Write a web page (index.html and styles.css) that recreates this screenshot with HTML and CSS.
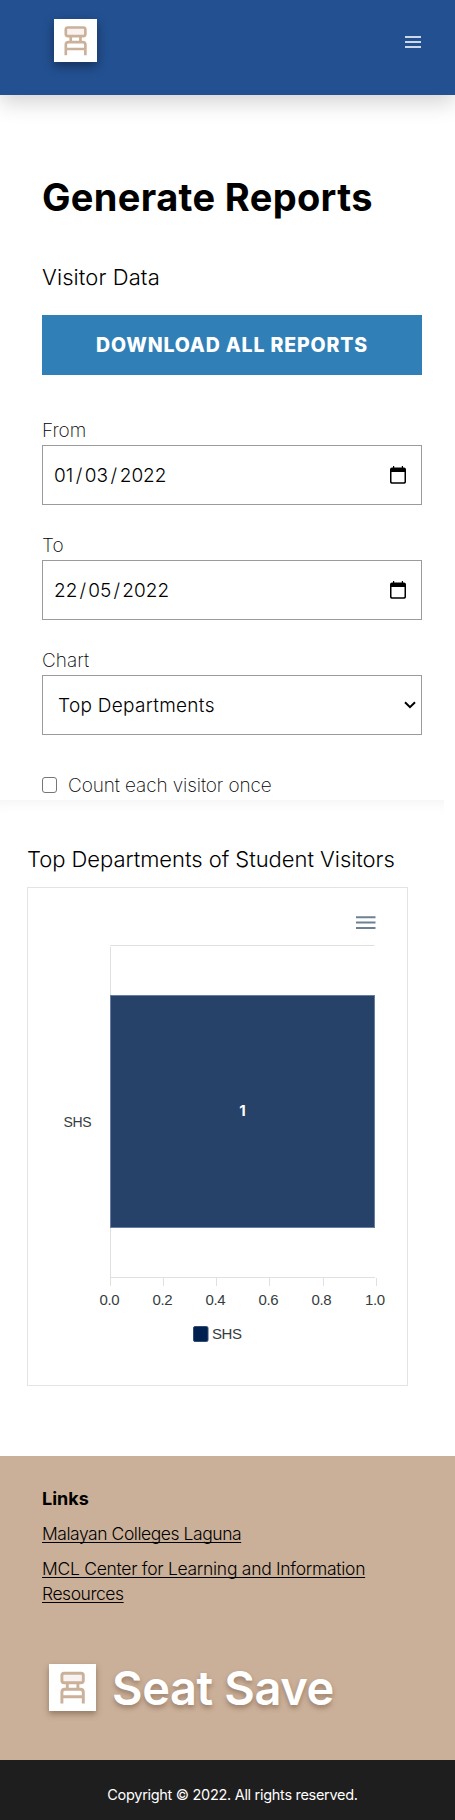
FILE: index.html
```html
<!DOCTYPE html>
<html lang="en">
<head>
<meta charset="utf-8">
<title>Generate Reports</title>
<link rel="stylesheet" href="styles.css">
</head>
<body>
<svg class="defs" width="0" height="0"><defs>
  <symbol id="chair" viewBox="0 0 47 47">
    <rect width="47" height="47" fill="#fff"/>
    <g fill="none" stroke="#cbb09a" stroke-width="2.9">
      <rect x="12.9" y="9.300" width="21.400" height="9.400" rx="2.200" fill="#f8f3f1"/>
      <path d="M18.300 19v6M28.900 19v6M12.900 39.500V28.200q0-3 3-3h15.400q3 0 3 3v11.300M12.900 32.800h21.400"/>
    </g>
  </symbol>
  <symbol id="calendar" viewBox="0 0 16 18">
    <path d="M2 1.500h1V0h1.200v1.500h7.600V0H13v1.500h1q2 0 2 2V16q0 1.700-1.700 1.700H1.700Q0 17.700 0 16V3.500q0-2 2-2zM1.500 6v9.600q0 .7.700.7h11.600q.7 0 .7-.7V6z" fill-rule="evenodd"/>
  </symbol>
</defs></svg>
<header class="topbar">
  <svg class="brand" viewBox="0 0 47 47"><use href="#chair"/></svg>
  <svg class="menu" width="16" height="12" viewBox="0 0 16 12"><path d="M0 1h16M0 6h16M0 11h16" stroke="#cdd7e5" stroke-width="2"/></svg>
</header>
<main class="form">
  <h1><span class="t-title">Generate Reports</span></h1>
  <h2><span class="t-sub">Visitor Data</span></h2>
  <button class="download"><span>DOWNLOAD ALL REPORTS</span></button>
  <div class="field">
    <div class="label">From</div>
    <div class="control"><span class="date first">01<i>/</i>03<i>/</i>2022</span><svg width="16" height="18"><use href="#calendar"/></svg></div>
  </div>
  <div class="field">
    <div class="label">To</div>
    <div class="control"><span class="date">22<i>/</i>05<i>/</i>2022</span><svg width="16" height="18"><use href="#calendar"/></svg></div>
  </div>
  <div class="field">
    <div class="label">Chart</div>
    <div class="control select"><span class="choice">Top Departments</span><svg width="12" height="8" viewBox="0 0 12 8"><path d="M1 1.200l5 5 5-5" fill="none" stroke="#000" stroke-width="2"/></svg></div>
  </div>
  <label class="check"><i class="box"></i><span>Count each visitor once</span></label>
</main>
<section class="results">
  <h2><span class="t-chart">Top Departments of Student Visitors</span></h2>
  <div class="card">
    <svg width="379" height="497" viewBox="28 888 379 497">
      <path d="M356 917.300h19.500M356 922.500h19.500M356 928h19.500" stroke="#6e8192" stroke-width="2"/>
      <path d="M110 945.500h264.500M110 1277.500h265" stroke="#e0e0e0"/>
      <path d="M110.500 947v331M110.500 1278v8M163.500 1278v8M216.500 1278v8M269.500 1278v8M323.500 1278v8M376.500 1278v8" stroke="#e0e0e0"/>
      <rect x="110.500" y="995.500" width="264" height="232" fill="#264268" stroke="#667d9f"/>
      <text class="value" x="242.500" y="1116" text-anchor="middle">1</text>
      <g class="axis" text-anchor="middle">
        <text x="77.500" y="1127" font-size="14" textLength="28">SHS</text>
        <text x="109.500" y="1305" textLength="20">0.0</text>
        <text x="162.500" y="1305" textLength="20">0.2</text>
        <text x="215.500" y="1305" textLength="20">0.4</text>
        <text x="268.500" y="1305" textLength="20">0.6</text>
        <text x="321.500" y="1305" textLength="20">0.8</text>
        <text x="375" y="1305" textLength="20">1.0</text>
        <text x="227" y="1339" textLength="30">SHS</text>
      </g>
      <rect x="193.500" y="1326.500" width="14.500" height="15" rx="1.500" fill="#00204f" stroke="#334d72"/>
    </svg>
  </div>
</section>
<footer class="footer">
  <h3><span>Links</span></h3>
  <p><a class="college">Malayan Colleges Laguna</a></p>
  <p><a class="center">MCL Center for Learning and Information</a><br><a class="college">Resources</a></p>
  <div class="logo"><svg width="47" height="47" viewBox="0 0 47 47"><use href="#chair"/></svg><span>Seat Save</span></div>
</footer>
<div class="copyright"><span>Copyright © 2022. All rights reserved.</span></div>
</body>
</html>
```
FILE: styles.css
```css
* { box-sizing: border-box; }
body { margin: 0; background: #fff; color: #000; font-family: Inter, "Open Sans", sans-serif; font-weight: 300; }
h1, h2, h3, p { margin: 0; white-space: nowrap; }
.defs { display: block; position: absolute; }
.topbar { height: 95px; background: #235091; box-shadow: 0 8px 20px rgba(0,0,0,.17); display: flex; justify-content: space-between; align-items: flex-start; padding: 19px 34px 0 54px; }
.brand { width: 43px; height: 43px; box-shadow: 0 4px 10px rgba(0,0,0,.4); }
.menu { margin-top: 17px; }
.form { height: 705px; padding: 77px 33px 0 42px; }
h1 { height: 50px; line-height: 50px; font-size: 38px; font-weight: 700; margin-bottom: 40px; }
.t-title { letter-spacing: .35px; }
h2 { height: 30px; line-height: 30px; font-size: 22px; font-weight: 300; }
.t-sub { letter-spacing: .1px; }
.t-chart { letter-spacing: -.05px; }
.download { display: block; width: 100%; height: 60px; margin: 23px 0 42px; padding: 0; border: 0; background: #307fb7; color: #fff; font: 800 19.5px/61px Inter, sans-serif; letter-spacing: .85px; white-space: nowrap; }
.field { margin-bottom: 27px; }
.label { height: 28px; line-height: 28px; font-size: 19px; font-weight: 200; }
.control { height: 60px; border: 1px solid #9b9b9b; display: flex; align-items: center; justify-content: space-between; padding: 0 15px 0 11px; font-size: 19px; }
.date i { font-style: normal; padding: 0 2.2px; }
.date.first i { padding: 0 2.5px; }
.control.select { padding: 0 5px 0 15px; }
.choice { letter-spacing: .3px; }
.check { display: flex; height: 28px; line-height: 28px; margin-top: 37px; font-size: 19px; font-weight: 200; letter-spacing: -.1px; white-space: nowrap; }
.box { width: 15px; height: 16px; margin: 5px 11px 0 0; border: 1px solid #767676; border-radius: 3px; }
.results { width: 444px; height: 656px; padding: 44px 36px 0 27px; box-shadow: inset 0 14px 16px -14px rgba(0,0,0,.07); }
.card { width: 381px; height: 499px; margin-top: 13px; border: 1px solid #e4e4e4; }
.card svg { display: block; }
.axis { font-family: "Liberation Sans", Arial, sans-serif; font-size: 15px; fill: #373d3f; font-weight: 400; }
.value { font-family: Inter, sans-serif; font-size: 15px; font-weight: 700; fill: #fff; }
.footer { height: 304px; background: #cbb099; padding: 30px 42px 0; font-size: 17.5px; line-height: 25px; }
h3 { font-size: 18px; line-height: 25px; font-weight: 700; }
.footer p { margin-top: 10px; }
.footer a { text-decoration: underline; text-decoration-thickness: 1px; text-underline-offset: 2px; text-decoration-skip-ink: none; }
.college { letter-spacing: -.45px; }
.center { letter-spacing: -.28px; }
.logo { display: flex; align-items: center; margin: 58px 0 0 7px; height: 47px; gap: 16px; color: #fff; font-size: 47px; font-weight: 600; letter-spacing: -.4px; line-height: 47px; white-space: nowrap; text-shadow: 0 3px 5px rgba(80,50,30,.4); }
.logo svg { box-shadow: 0 3px 6px rgba(80,50,30,.45); }
.copyright { height: 60px; line-height: 70px; background: #1e1e1e; color: #fff; text-align: center; font-size: 14.5px; font-weight: 400; letter-spacing: -.3px; padding-left: 10px; white-space: nowrap; overflow: hidden; }
```
